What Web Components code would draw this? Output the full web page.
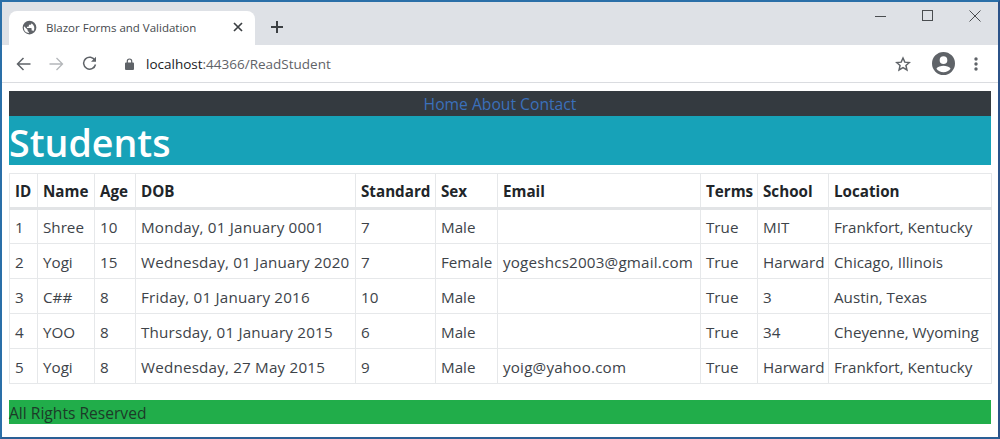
<!DOCTYPE html>
<html lang="en"><head><meta charset="utf-8"><title>Blazor Forms and Validation</title>
<style>
html,body{margin:0;padding:0;background:#fff;height:439px;overflow:hidden}
body{font-family:"Open Sans","Noto Sans",sans-serif;color:#212529}
</style></head><body>
<browser-window>
  <browser-tabs slot="tabs"></browser-tabs>
  <browser-toolbar slot="toolbar"></browser-toolbar>
  <site-nav></site-nav>
  <page-title>Students</page-title>
  <student-table></student-table>
  <site-footer>All Rights Reserved</site-footer>
</browser-window>
<script>
const def=(name,html)=>customElements.define(name,class extends HTMLElement{
  constructor(){super();this.attachShadow({mode:'open'}).innerHTML=html;}
});
def('browser-window',`<style>
:host{display:flex;flex-direction:column;box-sizing:border-box;width:1000px;height:439px;border:2px solid #2a6fa8;border-right-color:#2b5288;border-bottom-color:#2a5f95;background:#fff;overflow:hidden}
main{display:flex;flex-direction:column;padding:8px 7px 0 7px}
</style><slot name="tabs"></slot><slot name="toolbar"></slot><main><slot></slot></main>`);
def('browser-tabs',`<style>
:host{display:flex;height:43px;background:#dee1e6;box-sizing:border-box;padding:9px 0 0 7px;flex:none;font:11.500px "Open Sans",sans-serif;color:#45494d}
.tab{width:246px;height:34px;background:#fff;border-radius:8px 8px 0 0;display:flex;align-items:center;box-sizing:border-box;padding:0 0 2px 13px}
.tab span{margin-left:9px;flex:1;white-space:nowrap}
.tab svg.x{margin-right:12px}
.plus{margin:10px 0 0 16px}
.win{margin-left:auto;display:flex;align-items:flex-start;gap:36px;padding:0 17px 0 0;margin-top:-1px}
</style>
<div class="tab">
<svg width="15" height="15" viewBox="0 0 24 24"><path fill="#5f6368" d="M12 1a11 11 0 1 0 0 22 11 11 0 0 0 0-22zM3 12c0-.8.1-1.400.3-2.100L9 15.500v1.200c0 1.100.9 2 2 2v2.200A9 9 0 0 1 3 12zm15.300 6.100c-.3-.8-1-1.400-1.900-1.400h-1v-3c0-.5-.4-1-1-1H8v-2h2c.5 0 1-.4 1-1V7.700h2c1.100 0 2-.9 2-2v-.4a9 9 0 0 1 3.300 12.800z"/></svg>
<span>Blazor Forms and Validation</span>
<svg class="x" width="10" height="10" viewBox="0 0 10 10"><path d="M1 1l8 8M9 1l-8 8" stroke="#3c4043" stroke-width="1.700"/></svg>
</div>
<svg class="plus" width="12" height="12" viewBox="0 0 12 12"><path d="M6 0v12M0 6h12" stroke="#3c4043" stroke-width="2"/></svg>
<div class="win">
<svg width="11" height="11" viewBox="0 0 11 11"><path d="M0 6.500h11" stroke="#4a4d50" stroke-width="1"/></svg>
<svg width="11" height="11" viewBox="0 0 11 11"><rect x=".5" y=".5" width="10" height="10" fill="none" stroke="#4a4d50"/></svg>
<svg width="12" height="12" viewBox="0 0 12 12"><path d="M.5.500l11 11M11.500.500l-11 11" stroke="#4a4d50" stroke-width="1"/></svg>
</div>`);
def('browser-toolbar',`<style>
:host{display:flex;align-items:center;height:38px;flex:none;background:#fff;border-bottom:1px solid #dadce0;box-sizing:border-box;padding:0 0 0 14px;font:13.500px "Open Sans",sans-serif;color:#5f6368}
b{font-weight:400;color:#202124}
.url{margin-left:12px;white-space:nowrap}
.end{margin-left:auto;display:flex;align-items:center;padding-right:20px}
</style>
<svg width="15" height="14" viewBox="0 0 15 14"><path d="M14.500 7H1.500M7.500 1l-6 6 6 6" fill="none" stroke="#5f6368" stroke-width="1.500"/></svg>
<svg style="margin-left:18px" width="15" height="14" viewBox="0 0 15 14"><path d="M.5 7h13M7.500 1l6 6-6 6" fill="none" stroke="#b4b7ba" stroke-width="1.300"/></svg>
<svg style="margin-left:18px" width="15" height="15" viewBox="0 0 15 15"><path d="M13 4.500A6 6 0 1 0 13.500 8.500" fill="none" stroke="#5f6368" stroke-width="1.500"/><path d="M14 .8v5H9z" fill="#5f6368"/></svg>
<svg style="margin-left:28px" width="9" height="12" viewBox="0 0 9 12"><path fill="#5f6368" d="M1 4.500h7a1 1 0 0 1 1 1V11a1 1 0 0 1-1 1H1a1 1 0 0 1-1-1V5.500a1 1 0 0 1 1-1z"/><path d="M2.300 5V3.200a2.200 2.200 0 0 1 4.400 0V5" fill="none" stroke="#5f6368" stroke-width="1.200"/></svg>
<span class="url"><b>localhost</b>:44366/ReadStudent</span>
<span class="end">
<svg width="16" height="16" viewBox="0 0 24 24"><path fill="none" stroke="#5f6368" stroke-width="2.200" d="M12 3l2.700 6.200 6.800.6-5.100 4.500 1.500 6.600L12 17.400l-5.900 3.500 1.500-6.600-5.100-4.500 6.800-.6z"/></svg>
<svg style="margin-left:21px" width="23" height="23" viewBox="0 0 24 24"><path fill="#5f6368" d="M12 0a12 12 0 1 0 0 24 12 12 0 0 0 0-24zm0 4.500a4 4 0 1 1 0 8 4 4 0 0 1 0-8zm0 16.500c-3 0-5.700-1.400-7.400-3.600 1.200-2 4.800-3 7.400-3s6.200 1 7.400 3c-1.700 2.200-4.400 3.600-7.400 3.600z"/></svg>
<svg style="margin-left:19px" width="4" height="14" viewBox="0 0 4 14"><circle cx="2" cy="2" r="1.700" fill="#5f6368"/><circle cx="2" cy="7" r="1.700" fill="#5f6368"/><circle cx="2" cy="12" r="1.700" fill="#5f6368"/></svg>
</span>`);
def('site-nav',`<style>
:host{display:flex;justify-content:center;gap:4px;height:25px;background:#343a40;line-height:26px;font-size:15.700px;color:#3b70bb;flex:none}
</style><span>Home</span><span>About</span><span>Contact</span>`);
def('page-title',`<style>
:host{display:block;height:49px;background:#17a2b8;color:#fff;font-size:37.600px;font-weight:600;line-height:54px;flex:none;white-space:nowrap}
</style><slot></slot>`);
const cols=[28,57,41,220,80,62,203,57,71,163];
const head=['ID','Name','Age','DOB','Standard','Sex','Email','Terms','School','Location'];
const rows=[
['1','Shree','10','Monday, 01 January 0001','7','Male','','True','MIT','Frankfort, Kentucky'],
['2','Yogi','15','Wednesday, 01 January 2020','7','Female','yogeshcs2003@gmail.com','True','Harward','Chicago, Illinois'],
['3','C##','8','Friday, 01 January 2016','10','Male','','True','3','Austin, Texas'],
['4','YOO','8','Thursday, 01 January 2015','6','Male','','True','34','Cheyenne, Wyoming'],
['5','Yogi','8','Wednesday, 27 May 2015','9','Male','yoig@yahoo.com','True','Harward','Frankfort, Kentucky']];
const tr=(r,t)=>'<tr>'+r.map(c=>`<${t}>${c}</${t}>`).join('')+'</tr>';
def('student-table',`<style>
:host{display:block;margin:8px 0 16px;flex:none}
table{border-collapse:collapse;table-layout:fixed;width:982px;font-size:15.200px;color:#3d4349}
td,th{border:1px solid #e6e8ea;padding:0 0 0 5px;text-align:left;white-space:nowrap;overflow:hidden;height:35px;box-sizing:border-box}
td{padding-top:1px}
td:nth-child(4),td:nth-child(7){letter-spacing:.19px}
th{font-weight:700;color:#212529;border-bottom:3px solid #e2e4e6;height:35px;padding-bottom:0}
</style><table><colgroup>${cols.map(w=>`<col style="width:${w}px">`).join('')}</colgroup>
<thead>${tr(head,'th')}</thead><tbody>${rows.map(r=>tr(r,'td')).join('')}</tbody></table>`);
def('site-footer',`<style>
:host{display:block;height:24px;background:#21ad4a;color:#1c3a28;font-size:15.600px;line-height:27px;flex:none;white-space:nowrap}
</style><slot></slot>`);
</script></body></html>
